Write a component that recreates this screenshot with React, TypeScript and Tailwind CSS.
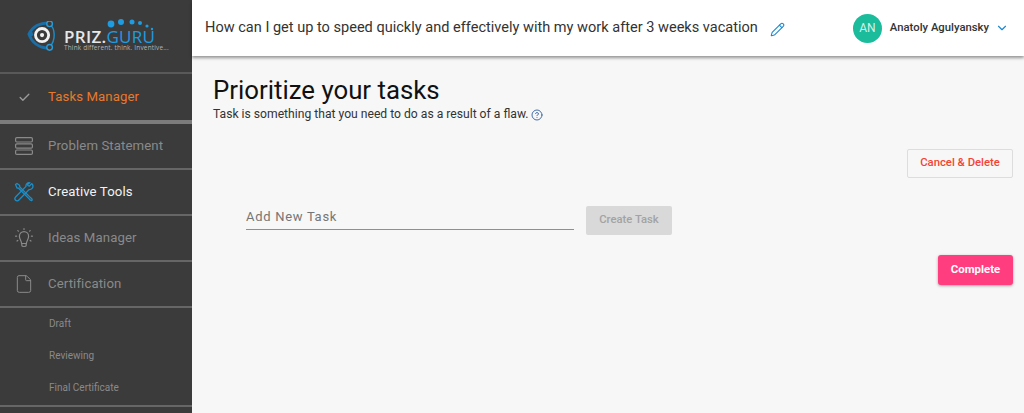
import { Check, ChevronDown, CircleHelp, File, Pencil } from 'lucide-react'
import type { ReactNode } from 'react'

function ToolsIcon() {
  return (
    <svg width="20" height="20" viewBox="0 0 20 20" fill="none" stroke="#1b8fc9" strokeWidth="1.3" strokeLinejoin="round" strokeLinecap="round">
      <path d="M1.5 2.5 L3 1.5 L5.5 3.2 L5.8 5 L16.5 15.6 C17.6 16.2 18.6 17.6 18 18.2 C17.3 19 16 18 15.2 16.9 L4.6 6.2 L3 6 Z" />
      <path d="M17.8 1.6 L15.4 4 L13.9 3.7 L13.6 2.2 L16 0.8 C13.8 0.2 11.6 1.8 12 4.4 L1.8 14.8 C0.8 15.8 0.8 17.4 1.6 18.2 C2.5 19.1 4 19 4.9 18 L15 7.6 C17.6 8 19.4 5.6 18.8 3.2 Z" />
    </svg>
  )
}

function RowsIcon() {
  return (
    <svg width="18" height="18" viewBox="0 0 18 18" fill="none" stroke="#8a8a8a" strokeWidth="1.2">
      <rect x="0.6" y="0.6" width="16.8" height="4.4" rx="1.2" />
      <rect x="0.6" y="6.8" width="16.8" height="4.4" rx="1.2" />
      <rect x="0.6" y="13" width="16.8" height="4.4" rx="1.2" />
    </svg>
  )
}

function BulbIcon() {
  return (
    <svg width="18" height="20" viewBox="0 0 18 20" fill="none" stroke="#8a8a8a" strokeWidth="1.2" strokeLinecap="round" strokeLinejoin="round">
      <path d="M6.6 15.5 C6.6 12.6 4.4 11.6 4.4 8.2 C4.4 5.6 6.4 3.6 9 3.6 C11.6 3.6 13.6 5.6 13.6 8.2 C13.6 11.6 11.4 12.6 11.4 15.5 Z" />
      <path d="M6.8 15.5 V17.6 C6.8 18.8 11.2 18.8 11.2 17.6 V15.5" />
      <path d="M9 0.6 V1.4 M2.8 2.6 L3.4 3.2 M15.2 2.6 L14.6 3.2 M0.6 8.2 H1.6 M16.4 8.2 H17.4 M2 13 L2.8 12.4 M16 13 L15.2 12.4" />
    </svg>
  )
}

function Logo() {
  return (
    <div className="relative h-[34px] w-[140px]">
      <svg className="absolute left-0 top-[2px]" width="32" height="32" viewBox="0 0 34 34" fill="none">
        <path d="M24 2 C14 2 6 5 2 14 C5 22 10 28 23 29" stroke="#1b6fa8" strokeWidth="3" />
        <path d="M24 3 C30 8 31 20 24 28" stroke="#1b8fc9" strokeWidth="1.5" />
        <circle cx="24" cy="3" r="3" fill="#3b3b3b" stroke="#2a9bd8" strokeWidth="1.5" />
        <circle cx="24" cy="28" r="3" fill="#3b3b3b" stroke="#2a9bd8" strokeWidth="1.5" />
        <circle cx="4" cy="14" r="2.5" fill="#1b6fa8" />
        <circle cx="16" cy="15" r="7" stroke="#f2f2f2" strokeWidth="3" />
        <circle cx="16" cy="15" r="2.2" fill="#f2f2f2" />
      </svg>
      <svg className="absolute left-[80px] top-[0px]" width="50" height="14" viewBox="0 0 50 14" fill="#1f9be0">
        <circle cx="4" cy="5" r="3.4" />
        <circle cx="14" cy="3" r="3" />
        <circle cx="25" cy="3" r="2.5" />
        <circle cx="33" cy="4" r="2" />
        <circle cx="40" cy="7" r="1.6" />
        <circle cx="45" cy="10" r="1.2" />
      </svg>
      <div className="absolute left-[37px] top-[10px] whitespace-nowrap text-[17px] leading-[16px] tracking-[0.3px] font-['Open_Sans',sans-serif]">
        <span className="font-semibold text-[#e8e8e8]">PRIZ.</span>
        <span className="font-normal text-[#1f9be0]">GURU</span>
      </div>
      <div className="absolute left-[37px] top-[26px] whitespace-nowrap text-[6.4px] leading-[6px] tracking-[0.2px] text-[#b5b5b5] font-['Open_Sans',sans-serif]">
        Think different. think. Inventive...
      </div>
    </div>
  )
}

function NavItem({ icon, label, color }: { icon: ReactNode; label: string; color: string }) {
  return (
    <div className="flex h-[46px] shrink-0 items-center border-b-2 border-[#666666]">
      <div className="flex w-[48px] shrink-0 justify-center">{icon}</div>
      <span className={`text-[13.2px] tracking-[0.1px] ${color}`}>{label}</span>
    </div>
  )
}

function Sidebar() {
  return (
    <aside className="flex h-[413px] w-[192px] shrink-0 flex-col overflow-hidden bg-[#3b3b3b]">
      <div className="flex h-[74px] shrink-0 items-start border-b-2 border-[#595959] pl-[27px] pt-[19px]">
        <Logo />
      </div>
      <div className="flex h-[50px] shrink-0 items-center border-b-4 border-[#7c7c7c]">
        <div className="flex w-[48px] shrink-0 justify-center">
          <Check size={13} strokeWidth={2.5} className="text-[#9a9a9a]" />
        </div>
        <span className="text-[13.2px] tracking-[0.1px] text-[#e8792b]">Tasks Manager</span>
      </div>
      <NavItem icon={<RowsIcon />} label="Problem Statement" color="text-[#8a8a8a]" />
      <NavItem icon={<ToolsIcon />} label="Creative Tools" color="text-[#f2f2f2]" />
      <NavItem icon={<BulbIcon />} label="Ideas Manager" color="text-[#8a8a8a]" />
      <NavItem icon={<File size={20} strokeWidth={1.2} className="text-[#8a8a8a]" />} label="Certification" color="text-[#8a8a8a]" />
      <div className="flex h-[99px] shrink-0 flex-col border-b-2 border-[#666666] pl-[49px]">
        {['Draft', 'Reviewing', 'Final Certificate'].map((item) => (
          <div key={item} className="flex h-[32px] items-center pb-[2px] text-[10px] text-[#8a8a8a]">
            {item}
          </div>
        ))}
      </div>
    </aside>
  )
}

function Header() {
  return (
    <header className="flex h-[56px] shrink-0 items-center bg-white pl-[13px] shadow-[0_2px_3px_rgba(0,0,0,0.4)]">
      <span className="whitespace-nowrap text-[14.55px] text-[#333333]">
        How can I get up to speed quickly and effectively with my work after 3 weeks vacation
      </span>
      <Pencil size={15} strokeWidth={1.7} className="ml-[12px] mt-[3px] text-[#1f88cc]" />
      <div className="ml-auto flex items-center pr-[15px]">
        <div className="flex h-[29px] w-[29px] items-center justify-center rounded-full bg-[#1abc9c] text-[12px] text-[#d5f3ec]">AN</div>
        <span className="ml-[8px] text-[11.3px] font-medium text-[#333333]">Anatoly Agulyansky</span>
        <ChevronDown size={14} strokeWidth={2} className="ml-[6px] text-[#1f88cc]" />
      </div>
    </header>
  )
}

export default function App() {
  return (
    <div className="flex h-[413px] w-[1024px] overflow-hidden bg-[#f7f7f7] font-['Roboto',sans-serif]">
      <Sidebar />
      <div className="flex min-w-0 flex-1 flex-col">
        <Header />
        <main className="flex flex-col pl-[21px] pr-[11px]">
          <h1 className="mt-[18px] text-[25.8px] font-normal leading-[32px] text-[#111111]">Prioritize your tasks</h1>
          <div className="flex items-center text-[12.15px] leading-[17px] text-[#333333]">
            Task is something that you need to do as a result of a flaw.
            <CircleHelp size={12} strokeWidth={1.8} className="ml-[3px] text-[#2f5f9e]" />
          </div>
          <button className="mt-[26px] h-[29px] w-[106px] self-end rounded-[2px] border border-[#dddddd] bg-[#f7f7f7] text-[11.3px] font-medium text-[#f44336]">
            Cancel &amp; Delete
          </button>
          <div className="mt-[28px] flex items-start pl-[33px]">
            <div className="h-[24px] w-[328px] border-b border-[#8f8f8f] pt-[2px] text-[13px] leading-[18px] tracking-[0.7px] text-[#757575]">
              Add New Task
            </div>
            <button className="ml-[12px] h-[29px] w-[86px] rounded-[2px] bg-[#d9d9d9] text-[11.25px] font-medium text-[#a3a3a3]">
              Create Task
            </button>
          </div>
          <button className="mt-[20px] h-[30px] w-[75px] self-end rounded-[3px] bg-[#ff3d7f] text-[11.4px] font-bold text-white shadow-[0_1px_3px_rgba(0,0,0,0.35)]">
            Complete
          </button>
        </main>
      </div>
    </div>
  )
}
